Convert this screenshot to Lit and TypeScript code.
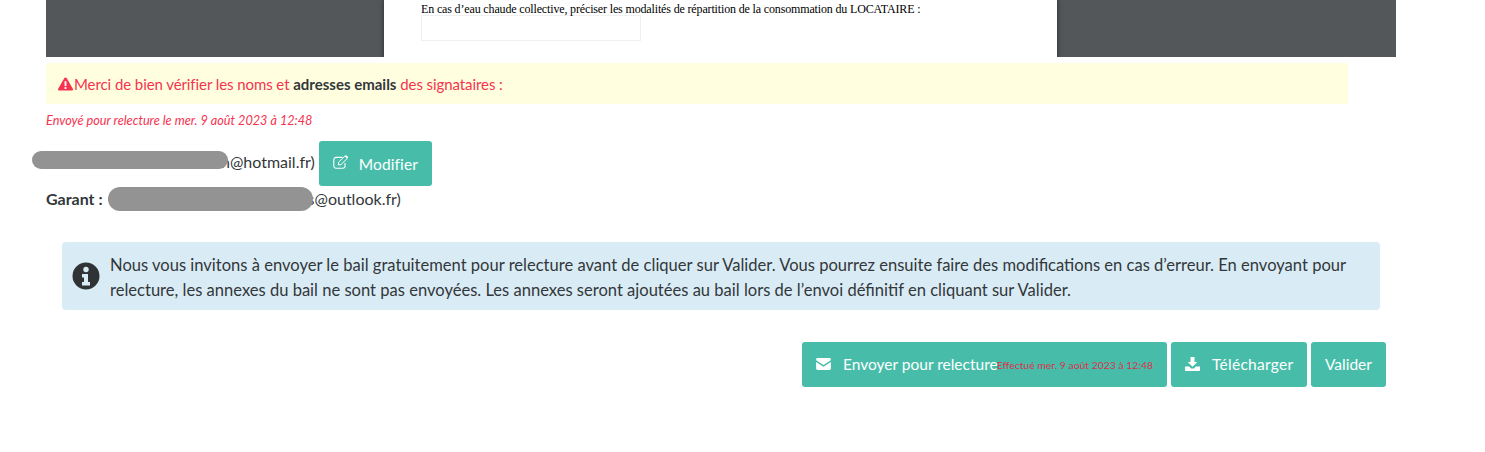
import { LitElement, html, css } from "lit";
import { customElement } from "lit/decorators.js";

const icons = {
  warn: html`<svg class="ico" viewBox="0 0 16 14" width="15" height="14"><path fill="#f5334f" d="M8 0c.5 0 .9.3 1.2.7l6.6 11.4c.5.9-.1 1.9-1.1 1.9H1.3C.3 14-.3 13 .2 12.100L6.800.7C7.100.3 7.500 0 8 0z"/><rect x="7" y="4" width="2" height="5.200" fill="#fff"/><rect x="7" y="10.300" width="2" height="2" fill="#fff"/></svg>`,
  edit: html`<svg viewBox="0 0 16 14" width="16" height="14" fill="none" stroke="#fff" stroke-width="1.100"><path d="M12 8v3a2.200 2.200 0 0 1-2.200 2.200H3A2.200 2.200 0 0 1 .8 11V4.600A2.200 2.200 0 0 1 3 2.400h6.500"/><path stroke-width="1" d="M5.600 7.200 11.900 1l2.400 2.400-6.300 6.200-2.700.4z"/><path stroke="none" fill="#fff" d="M12.500.4c.3-.3.700-.3 1 0l1.400 1.400c.3.3.3.700 0 1l-.6.6-2.400-2.400z"/></svg>`,
  mail: html`<svg viewBox="0 0 16 13" width="15" height="12" fill="#fff"><path d="M0 1.500A1.500 1.500 0 0 1 1.500 0h13A1.500 1.500 0 0 1 16 1.500c0 .6-.4 1-.9 1.400L8 7.600.9 2.900C.4 2.500 0 2.100 0 1.500z"/><path d="M0 4.300 8 9.500l8-5.200v7.200a1.500 1.500 0 0 1-1.500 1.500h-13A1.500 1.500 0 0 1 0 11.500z"/></svg>`,
  download: html`<svg viewBox="0 0 15 14" width="15" height="14" fill="#fff"><path d="M5.500 0h4v5h2.800L7.500 9.800 2.700 5h2.800z"/><path d="M0 9.500h4.200l1.800 2h3l1.800-2H15v3.700a.8.8 0 0 1-.8.8H.8a.8.8 0 0 1-.8-.8z"/></svg>`,
  info: html`<svg viewBox="0 0 28 28" width="28" height="28"><circle cx="14" cy="14" r="13.500" fill="#2f3336"/><circle cx="14" cy="7.500" r="2.700" fill="#d9ecf5"/><path fill="#d9ecf5" d="M10 12h6v8h2v3.500H10V20h2v-4.500h-2z"/></svg>`,
};

@customElement("app-root")
export class AppRoot extends LitElement {
  static styles = css`
    :host {
      display: block;
      height: 452px;
      overflow: hidden;
      background: #fff;
      color: #33373a;
      font-family: Lato, "Open Sans", sans-serif;
      font-size: 15px;
    }

    .viewer {
      display: flex;
      width: 1350px;
      height: 57px;
      margin-left: 46px;
      padding-left: 338px;
      box-sizing: border-box;
      overflow: hidden;
      background: #54575a;
    }

    .sheet {
      flex: none;
      width: 673px;
      height: 80px;
      box-sizing: border-box;
      padding-left: 37px;
      background: #fff;
      box-shadow: 0 0 4px 1px #35383a;
      color: #000;
      font-family: "Liberation Serif", serif;
      font-size: 12px;
      letter-spacing: -0.15px;
      line-height: 14px;
    }

    .sheet p {
      margin: 0;
      padding-top: 2px;
      height: 13px;
    }

    .field {
      width: 220px;
      height: 26px;
      box-sizing: border-box;
      border: 1px solid #eff0f1;
    }

    .notice {
      display: flex;
      align-items: center;
      gap: 1px;
      width: 1302px;
      height: 41px;
      margin: 6px 0 0 46px;
      padding-left: 12px;
      box-sizing: border-box;
      background: #ffffe0;
      color: #f5334f;
      font-size: 15px;
      letter-spacing: -0.08px;
    }

    .notice b {
      color: #33373a;
      font-weight: 700;
      letter-spacing: 0;
    }

    .ico {
      flex: none;
    }

    .sent {
      margin: 9px 0 0 46px;
      height: 15px;
      line-height: 15px;
      color: #f5334f;
      font-size: 12.700px;
      font-style: italic;
    }

    .signer {
      display: flex;
      align-items: center;
      font-size: 16px;
      white-space: nowrap;
    }

    .signer.first {
      margin: 13px 0 0 32px;
      height: 45px;
    }

    .signer.second {
      margin: 1px 0 0 46px;
      height: 24px;
    }

    .signer b {
      margin: 0 5px 2px 0;
      font-weight: 700;
    }

    .redact {
      flex: none;
      background: #939393;
      position: relative;
      z-index: 1;
    }

    .first .redact {
      width: 196px;
      height: 18px;
      border-radius: 9px;
      margin-top: -7px;
      margin-right: -7px;
    }

    .second .redact {
      width: 205px;
      height: 24px;
      border-radius: 12px;
      margin-right: -5px;
    }

    .first .mail {
      margin-top: -5px;
    }

    .second .mail {
      margin-bottom: 2px;
    }

    .btn {
      display: inline-flex;
      align-items: center;
      box-sizing: border-box;
      height: 45px;
      padding: 0 14px 2px;
      border-radius: 3px;
      background: #47bda9;
      color: #fff;
      font-size: 15.500px;
      white-space: nowrap;
    }

    .btn svg {
      flex: none;
      margin-right: 12px;
    }

    .first .btn {
      width: 113px;
      margin-left: 4px;
      padding-bottom: 0;
      letter-spacing: 0.1px;
    }

    .first .btn svg {
      margin: -4px 10px 0 0;
    }

    .info {
      display: flex;
      align-items: center;
      gap: 10px;
      width: 1318px;
      height: 68px;
      margin: 31px 0 0 62px;
      padding-left: 10px;
      box-sizing: border-box;
      border-radius: 4px;
      background: #d9ecf5;
      font-size: 16.560px;
      line-height: 25px;
    }

    .info svg {
      flex: none;
    }

    .info p {
      margin: 4px 0 0;
    }

    .actions {
      display: flex;
      gap: 4px;
      margin: 32px 0 0 802px;
    }

    .actions .send {
      width: 365px;
    }

    .actions .dl {
      width: 136px;
      letter-spacing: 0.28px;
    }

    .actions .ok {
      width: 75px;
    }

    .done {
      color: #d8334f;
      font-size: 10.400px;
      margin: 2px 0 0 -1px;
      letter-spacing: 0;
    }
  `;

  render() {
    return html`
      <div class="viewer">
        <div class="sheet">
          <p>En cas d’eau chaude collective, préciser les modalités de répartition de la consommation du LOCATAIRE :</p>
          <div class="field"></div>
        </div>
      </div>

      <div class="notice">
        ${icons.warn}
        <span>Merci de bien vérifier les noms et <b>adresses emails</b> des signataires :</span>
      </div>
      <div class="sent">Envoyé pour relecture le mer. 9 août 2023 à 12:48</div>

      <div class="signer first">
        <span class="redact"></span>
        <span class="mail">n@hotmail.fr)</span>
        <span class="btn">${icons.edit}Modifier</span>
      </div>
      <div class="signer second">
        <b>Garant :</b>
        <span class="redact"></span>
        <span class="mail">s@outlook.fr)</span>
      </div>

      <div class="info">
        ${icons.info}
        <p>
          Nous vous invitons à envoyer le bail gratuitement pour relecture avant de cliquer sur Valider. Vous pourrez ensuite faire des modifications en cas d’erreur. En envoyant pour<br />
          relecture, les annexes du bail ne sont pas envoyées. Les annexes seront ajoutées au bail lors de l’envoi définitif en cliquant sur Valider.
        </p>
      </div>

      <div class="actions">
        <span class="btn send">${icons.mail}Envoyer pour relecture<span class="done">Effectué mer. 9 août 2023 à 12:48</span></span>
        <span class="btn dl">${icons.download}Télécharger</span>
        <span class="btn ok">Valider</span>
      </div>
    `;
  }
}
